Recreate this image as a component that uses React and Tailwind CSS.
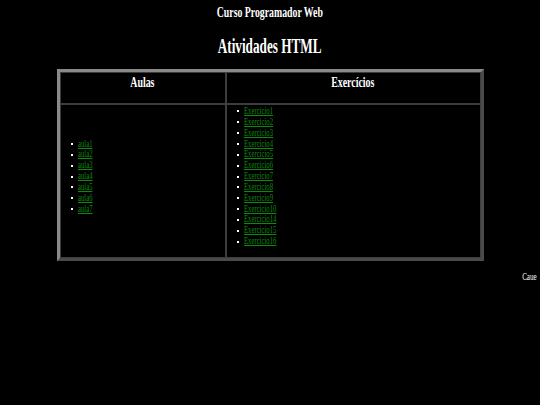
import React from 'react';

const aulas = ['aula1', 'aula2', 'aula3', 'aula4', 'aula5', 'aula6', 'aula7'];

const exercicios = [
  'Exercicio1',
  'Exercicio2',
  'Exercicio3',
  'Exercicio4',
  'Exercicio5',
  'Exercicio6',
  'Exercicio7',
  'Exercicio8',
  'Exercicio9',
  'Exercicio10',
  'Exercicio14',
  'Exercicio15',
  'Exercicio16',
];

// =========================
// LIST OF LINKS
// =========================
function LinkList({ items }) {
  return (
    <ul className="flex flex-col">
      {items.map((item) => (
        <li key={item} className="flex items-center h-[10.85px] text-[10px] leading-[10.85px]">
          <span className="w-[2px] h-[2px] bg-white mr-[5px] shrink-0" />
          <a
            href="#"
            className="inline-block whitespace-nowrap origin-left scale-x-[0.67] text-[#0a8c0a] underline"
          >
            {item}
          </a>
        </li>
      ))}
    </ul>
  );
}

export default function App() {
  return (
    <div
      className="w-[540px] h-[405px] overflow-hidden bg-black text-white"
      style={{ fontFamily: '"Liberation Serif", "Times New Roman", serif' }}
    >
      {/* HEADER */}
      <div className="pt-[5px] text-center text-[14px] leading-[16px] font-bold">
        <span className="inline-block whitespace-nowrap origin-center scale-x-[0.7]">
          Curso Programador Web
        </span>
      </div>

      <div className="mt-[13px] text-center text-[20px] leading-[24px] font-bold">
        <span className="inline-block whitespace-nowrap origin-center scale-x-[0.66]">
          Atividades HTML
        </span>
      </div>

      {/* TABLE */}
      <div className="mt-[11px] mx-auto w-[427px] border-[3px] border-t-[#8a8a8a] border-l-[#8a8a8a] border-r-[#4a4a4a] border-b-[#4a4a4a] grid grid-cols-[166px_255px]">
        <div className="h-[32px] border border-[#3d3d3d] text-center text-[15px] leading-[18px] font-bold">
          <span className="inline-block whitespace-nowrap origin-center scale-x-[0.66]">Aulas</span>
        </div>
        <div className="h-[32px] border border-[#3d3d3d] text-center text-[15px] leading-[18px] font-bold">
          <span className="inline-block whitespace-nowrap origin-center scale-x-[0.66]">
            Exercícios
          </span>
        </div>

        <div className="h-[154px] border border-[#3d3d3d] flex flex-col justify-center pl-[10px] pt-[1px] pb-[10px]">
          <LinkList items={aulas} />
        </div>
        <div className="h-[154px] border border-[#3d3d3d] flex flex-col justify-center pl-[10px] pt-[1px] pb-[10px]">
          <LinkList items={exercicios} />
        </div>
      </div>

      {/* FOOTER */}
      <div className="mt-[9px] pr-[3px] text-right text-[11px] leading-[12px]">
        <span className="inline-block whitespace-nowrap origin-right scale-x-[0.64]">Caue</span>
      </div>
    </div>
  );
}
